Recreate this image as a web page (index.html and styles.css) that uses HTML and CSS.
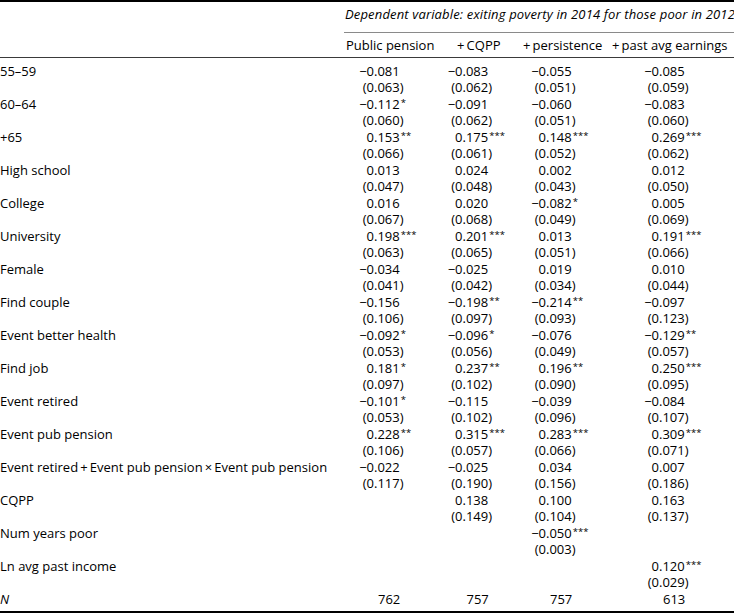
FILE: index.html
```html
<!DOCTYPE html>
<html lang="en">
<head>
<meta charset="utf-8">
<title>Regression table</title>
<link rel="stylesheet" href="styles.css">
</head>
<body>
<table class="reg">
  <colgroup>
    <col class="w-lab"><col class="w-c1"><col class="w-c2"><col class="w-c3"><col class="w-c4">
  </colgroup>
  <thead>
    <tr class="dep">
      <th></th>
      <th colspan="4" class="dep-cell">Dependent variable: exiting poverty in 2014 for those poor in 2012</th>
    </tr>
    <tr class="heads">
      <th></th>
      <th class="c1">Public pension</th>
      <th class="c2">+&thinsp;CQPP</th>
      <th class="c3">+&thinsp;persistence</th>
      <th class="c4">+&thinsp;past avg earnings</th>
    </tr>
  </thead>
  <tbody>
    <tr>
      <td class="lab">55–59</td>
      <td class="c1"><div class="ln"><span class="i">−0</span><span class="f">.081</span></div><div class="ln"><span class="i">(0</span><span class="f">.063)</span></div></td>
      <td class="c2"><div class="ln"><span class="i">−0</span><span class="f">.083</span></div><div class="ln"><span class="i">(0</span><span class="f">.062)</span></div></td>
      <td class="c3"><div class="ln"><span class="i">−0</span><span class="f">.055</span></div><div class="ln"><span class="i">(0</span><span class="f">.051)</span></div></td>
      <td class="c4"><div class="ln"><span class="i">−0</span><span class="f">.085</span></div><div class="ln"><span class="i">(0</span><span class="f">.059)</span></div></td>
    </tr>
    <tr>
      <td class="lab">60–64</td>
      <td class="c1"><div class="ln"><span class="i">−0</span><span class="f">.112<span class="st">*</span></span></div><div class="ln"><span class="i">(0</span><span class="f">.060)</span></div></td>
      <td class="c2"><div class="ln"><span class="i">−0</span><span class="f">.091</span></div><div class="ln"><span class="i">(0</span><span class="f">.062)</span></div></td>
      <td class="c3"><div class="ln"><span class="i">−0</span><span class="f">.060</span></div><div class="ln"><span class="i">(0</span><span class="f">.051)</span></div></td>
      <td class="c4"><div class="ln"><span class="i">−0</span><span class="f">.083</span></div><div class="ln"><span class="i">(0</span><span class="f">.060)</span></div></td>
    </tr>
    <tr>
      <td class="lab">+65</td>
      <td class="c1"><div class="ln"><span class="i">0</span><span class="f">.153<span class="st">**</span></span></div><div class="ln"><span class="i">(0</span><span class="f">.066)</span></div></td>
      <td class="c2"><div class="ln"><span class="i">0</span><span class="f">.175<span class="st">***</span></span></div><div class="ln"><span class="i">(0</span><span class="f">.061)</span></div></td>
      <td class="c3"><div class="ln"><span class="i">0</span><span class="f">.148<span class="st">***</span></span></div><div class="ln"><span class="i">(0</span><span class="f">.052)</span></div></td>
      <td class="c4"><div class="ln"><span class="i">0</span><span class="f">.269<span class="st">***</span></span></div><div class="ln"><span class="i">(0</span><span class="f">.062)</span></div></td>
    </tr>
    <tr>
      <td class="lab">High school</td>
      <td class="c1"><div class="ln"><span class="i">0</span><span class="f">.013</span></div><div class="ln"><span class="i">(0</span><span class="f">.047)</span></div></td>
      <td class="c2"><div class="ln"><span class="i">0</span><span class="f">.024</span></div><div class="ln"><span class="i">(0</span><span class="f">.048)</span></div></td>
      <td class="c3"><div class="ln"><span class="i">0</span><span class="f">.002</span></div><div class="ln"><span class="i">(0</span><span class="f">.043)</span></div></td>
      <td class="c4"><div class="ln"><span class="i">0</span><span class="f">.012</span></div><div class="ln"><span class="i">(0</span><span class="f">.050)</span></div></td>
    </tr>
    <tr>
      <td class="lab">College</td>
      <td class="c1"><div class="ln"><span class="i">0</span><span class="f">.016</span></div><div class="ln"><span class="i">(0</span><span class="f">.067)</span></div></td>
      <td class="c2"><div class="ln"><span class="i">0</span><span class="f">.020</span></div><div class="ln"><span class="i">(0</span><span class="f">.068)</span></div></td>
      <td class="c3"><div class="ln"><span class="i">−0</span><span class="f">.082<span class="st">*</span></span></div><div class="ln"><span class="i">(0</span><span class="f">.049)</span></div></td>
      <td class="c4"><div class="ln"><span class="i">0</span><span class="f">.005</span></div><div class="ln"><span class="i">(0</span><span class="f">.069)</span></div></td>
    </tr>
    <tr>
      <td class="lab">University</td>
      <td class="c1"><div class="ln"><span class="i">0</span><span class="f">.198<span class="st">***</span></span></div><div class="ln"><span class="i">(0</span><span class="f">.063)</span></div></td>
      <td class="c2"><div class="ln"><span class="i">0</span><span class="f">.201<span class="st">***</span></span></div><div class="ln"><span class="i">(0</span><span class="f">.065)</span></div></td>
      <td class="c3"><div class="ln"><span class="i">0</span><span class="f">.013</span></div><div class="ln"><span class="i">(0</span><span class="f">.051)</span></div></td>
      <td class="c4"><div class="ln"><span class="i">0</span><span class="f">.191<span class="st">***</span></span></div><div class="ln"><span class="i">(0</span><span class="f">.066)</span></div></td>
    </tr>
    <tr>
      <td class="lab">Female</td>
      <td class="c1"><div class="ln"><span class="i">−0</span><span class="f">.034</span></div><div class="ln"><span class="i">(0</span><span class="f">.041)</span></div></td>
      <td class="c2"><div class="ln"><span class="i">−0</span><span class="f">.025</span></div><div class="ln"><span class="i">(0</span><span class="f">.042)</span></div></td>
      <td class="c3"><div class="ln"><span class="i">0</span><span class="f">.019</span></div><div class="ln"><span class="i">(0</span><span class="f">.034)</span></div></td>
      <td class="c4"><div class="ln"><span class="i">0</span><span class="f">.010</span></div><div class="ln"><span class="i">(0</span><span class="f">.044)</span></div></td>
    </tr>
    <tr>
      <td class="lab">Find couple</td>
      <td class="c1"><div class="ln"><span class="i">−0</span><span class="f">.156</span></div><div class="ln"><span class="i">(0</span><span class="f">.106)</span></div></td>
      <td class="c2"><div class="ln"><span class="i">−0</span><span class="f">.198<span class="st">**</span></span></div><div class="ln"><span class="i">(0</span><span class="f">.097)</span></div></td>
      <td class="c3"><div class="ln"><span class="i">−0</span><span class="f">.214<span class="st">**</span></span></div><div class="ln"><span class="i">(0</span><span class="f">.093)</span></div></td>
      <td class="c4"><div class="ln"><span class="i">−0</span><span class="f">.097</span></div><div class="ln"><span class="i">(0</span><span class="f">.123)</span></div></td>
    </tr>
    <tr>
      <td class="lab">Event better health</td>
      <td class="c1"><div class="ln"><span class="i">−0</span><span class="f">.092<span class="st">*</span></span></div><div class="ln"><span class="i">(0</span><span class="f">.053)</span></div></td>
      <td class="c2"><div class="ln"><span class="i">−0</span><span class="f">.096<span class="st">*</span></span></div><div class="ln"><span class="i">(0</span><span class="f">.056)</span></div></td>
      <td class="c3"><div class="ln"><span class="i">−0</span><span class="f">.076</span></div><div class="ln"><span class="i">(0</span><span class="f">.049)</span></div></td>
      <td class="c4"><div class="ln"><span class="i">−0</span><span class="f">.129<span class="st">**</span></span></div><div class="ln"><span class="i">(0</span><span class="f">.057)</span></div></td>
    </tr>
    <tr>
      <td class="lab">Find job</td>
      <td class="c1"><div class="ln"><span class="i">0</span><span class="f">.181<span class="st">*</span></span></div><div class="ln"><span class="i">(0</span><span class="f">.097)</span></div></td>
      <td class="c2"><div class="ln"><span class="i">0</span><span class="f">.237<span class="st">**</span></span></div><div class="ln"><span class="i">(0</span><span class="f">.102)</span></div></td>
      <td class="c3"><div class="ln"><span class="i">0</span><span class="f">.196<span class="st">**</span></span></div><div class="ln"><span class="i">(0</span><span class="f">.090)</span></div></td>
      <td class="c4"><div class="ln"><span class="i">0</span><span class="f">.250<span class="st">***</span></span></div><div class="ln"><span class="i">(0</span><span class="f">.095)</span></div></td>
    </tr>
    <tr>
      <td class="lab">Event retired</td>
      <td class="c1"><div class="ln"><span class="i">−0</span><span class="f">.101<span class="st">*</span></span></div><div class="ln"><span class="i">(0</span><span class="f">.053)</span></div></td>
      <td class="c2"><div class="ln"><span class="i">−0</span><span class="f">.115</span></div><div class="ln"><span class="i">(0</span><span class="f">.102)</span></div></td>
      <td class="c3"><div class="ln"><span class="i">−0</span><span class="f">.039</span></div><div class="ln"><span class="i">(0</span><span class="f">.096)</span></div></td>
      <td class="c4"><div class="ln"><span class="i">−0</span><span class="f">.084</span></div><div class="ln"><span class="i">(0</span><span class="f">.107)</span></div></td>
    </tr>
    <tr>
      <td class="lab">Event pub pension</td>
      <td class="c1"><div class="ln"><span class="i">0</span><span class="f">.228<span class="st">**</span></span></div><div class="ln"><span class="i">(0</span><span class="f">.106)</span></div></td>
      <td class="c2"><div class="ln"><span class="i">0</span><span class="f">.315<span class="st">***</span></span></div><div class="ln"><span class="i">(0</span><span class="f">.057)</span></div></td>
      <td class="c3"><div class="ln"><span class="i">0</span><span class="f">.283<span class="st">***</span></span></div><div class="ln"><span class="i">(0</span><span class="f">.066)</span></div></td>
      <td class="c4"><div class="ln"><span class="i">0</span><span class="f">.309<span class="st">***</span></span></div><div class="ln"><span class="i">(0</span><span class="f">.071)</span></div></td>
    </tr>
    <tr>
      <td class="lab">Event retired&thinsp;+&thinsp;Event pub pension&thinsp;×&thinsp;Event pub pension</td>
      <td class="c1"><div class="ln"><span class="i">−0</span><span class="f">.022</span></div><div class="ln"><span class="i">(0</span><span class="f">.117)</span></div></td>
      <td class="c2"><div class="ln"><span class="i">−0</span><span class="f">.025</span></div><div class="ln"><span class="i">(0</span><span class="f">.190)</span></div></td>
      <td class="c3"><div class="ln"><span class="i">0</span><span class="f">.034</span></div><div class="ln"><span class="i">(0</span><span class="f">.156)</span></div></td>
      <td class="c4"><div class="ln"><span class="i">0</span><span class="f">.007</span></div><div class="ln"><span class="i">(0</span><span class="f">.186)</span></div></td>
    </tr>
    <tr>
      <td class="lab">CQPP</td>
      <td class="c1"></td>
      <td class="c2"><div class="ln"><span class="i">0</span><span class="f">.138</span></div><div class="ln"><span class="i">(0</span><span class="f">.149)</span></div></td>
      <td class="c3"><div class="ln"><span class="i">0</span><span class="f">.100</span></div><div class="ln"><span class="i">(0</span><span class="f">.104)</span></div></td>
      <td class="c4"><div class="ln"><span class="i">0</span><span class="f">.163</span></div><div class="ln"><span class="i">(0</span><span class="f">.137)</span></div></td>
    </tr>
    <tr>
      <td class="lab">Num years poor</td>
      <td class="c1"></td>
      <td class="c2"></td>
      <td class="c3"><div class="ln"><span class="i">−0</span><span class="f">.050<span class="st">***</span></span></div><div class="ln"><span class="i">(0</span><span class="f">.003)</span></div></td>
      <td class="c4"></td>
    </tr>
    <tr>
      <td class="lab">Ln avg past income</td>
      <td class="c1"></td>
      <td class="c2"></td>
      <td class="c3"></td>
      <td class="c4"><div class="ln"><span class="i">0</span><span class="f">.120<span class="st">***</span></span></div><div class="ln"><span class="i">(0</span><span class="f">.029)</span></div></td>
    </tr>
    <tr class="nrow">
      <td class="lab"><em>N</em></td>
      <td class="c1"><div class="ln"><span class="i"></span><span class="nv">762</span></div></td>
      <td class="c2"><div class="ln"><span class="i"></span><span class="nv">757</span></div></td>
      <td class="c3"><div class="ln"><span class="i"></span><span class="nv">757</span></div></td>
      <td class="c4"><div class="ln"><span class="i"></span><span class="nv">613</span></div></td>
    </tr>
  </tbody>
</table>
</body>
</html>
```

FILE: styles.css
```css
html, body {
  margin: 0;
  padding: 0;
  background: #fff;
}

body {
  color: #000;
  font-family: "Open Sans", "Noto Sans", "DejaVu Sans", sans-serif;
  font-size: 13px;
}

.reg {
  width: 734px;
  border-collapse: collapse;
  table-layout: fixed;
  border-top: 2px solid #000;
  border-bottom: 2px solid #000;
}

.w-lab { width: 344px; }
.w-c1 { width: 102px; }
.w-c2 { width: 74px; }
.w-c3 { width: 86px; }
.w-c4 { width: 128px; }

.reg th,
.reg td {
  padding: 0;
  line-height: 16.5px;
  text-align: left;
  vertical-align: top;
  font-weight: normal;
  white-space: nowrap;
}

.dep th {
  padding-top: 4px;
  padding-bottom: 9px;
}

.dep .dep-cell {
  padding-left: 1px;
  font-style: italic;
  letter-spacing: 0.15px;
  border-bottom: 1px solid #8a8a8a;
}

.heads th {
  padding-top: 4px;
  padding-bottom: 3.5px;
  border-bottom: 1px solid #3a3a3a;
}

.heads .c1 { padding-left: 2px; }
.heads .c2 { padding-left: 11px; }
.heads .c3 { padding-left: 3px; }
.heads .c4 { padding-left: 6px; }

tbody tr:first-child td {
  padding-top: 5px;
}

.nrow td {
  padding-bottom: 4px;
}

.ln {
  height: 16.5px;
}

tbody .c1 .ln { padding-left: 14px; }
tbody .c2 .ln { padding-left: 0.5px; }
tbody .c3 .ln { padding-left: 10px; }
tbody .c4 .ln { padding-left: 37px; }

.i {
  display: inline-block;
  width: 16px;
  text-align: right;
}

.st {
  position: relative;
  top: -3px;
  font-size: 9.5px;
  line-height: 0;
  margin-left: 1px;
}

.nv {
  margin-left: 4px;
}

.lab em {
  font-style: italic;
}
```
